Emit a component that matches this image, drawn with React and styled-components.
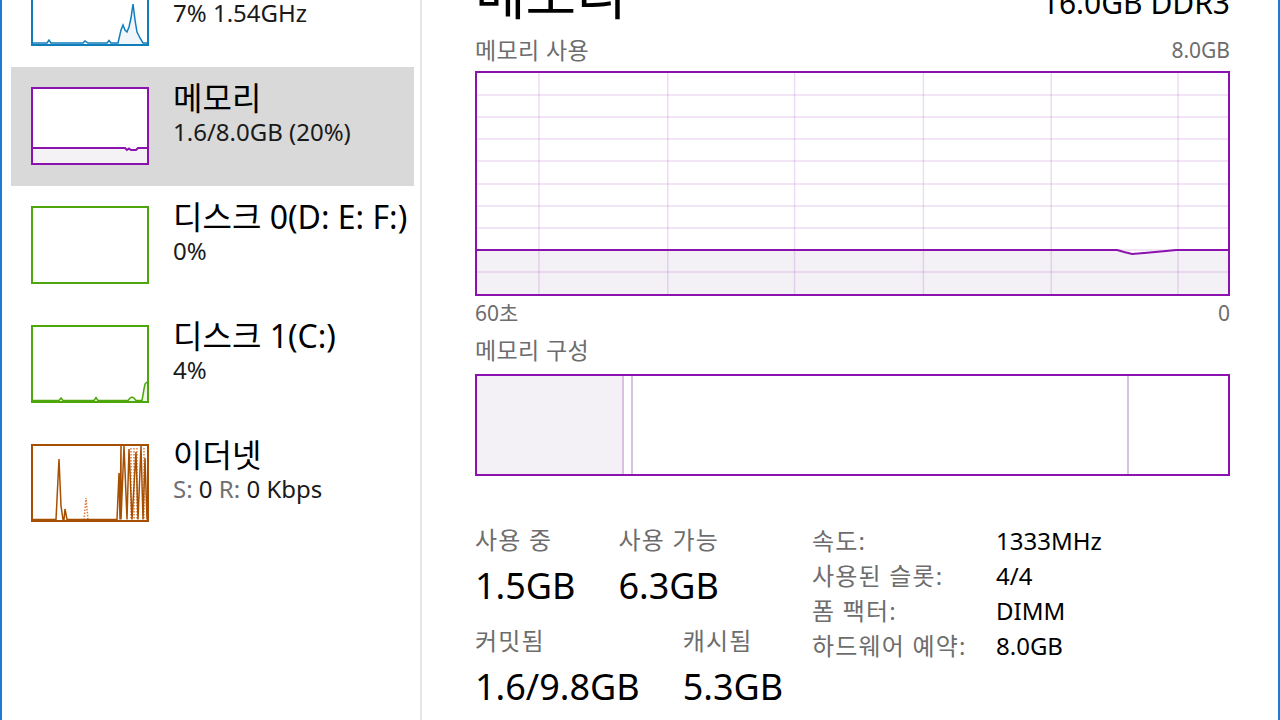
import React from "react";
import styled, { createGlobalStyle } from "styled-components";

const GlobalStyle = createGlobalStyle`
  html, body { margin: 0; padding: 0; background: #fff; }
  body {
    overflow: hidden;
    font-family: "Noto Sans", "Noto Sans CJK KR", sans-serif;
    color: #000;
  }
`;

const Window = styled.div`
  width: 1280px;
  height: 720px;
  box-sizing: border-box;
  border-left: 2px solid #1f7ad4;
  border-right: 2px solid #1f7ad4;
  display: flex;
  overflow: hidden;
  background: #fff;
`;

const Sidebar = styled.nav`
  width: 420px;
  flex: none;
  box-sizing: border-box;
  border-right: 2px solid #e6e6e6;
  padding-left: 9px;
  overflow: hidden;
`;

const SideList = styled.div`
  margin-top: -52px;
  display: flex;
  flex-direction: column;
`;

const SideItem = styled.div`
  width: 403px;
  height: 119px;
  flex: none;
  box-sizing: border-box;
  padding-left: 20px;
  display: flex;
  align-items: flex-start;
  gap: 24px;
  background: ${(p) => (p.$selected ? "#d9d9d9" : "transparent")};
`;

const Thumb = styled.div`
  width: 118px;
  height: 78px;
  margin-top: 20px;
  flex: none;
  box-sizing: border-box;
  border: 2px solid ${(p) => p.$color};
  background: #fff;
  svg { display: block; }
`;

const SideText = styled.div`
  padding-top: 13px;
  white-space: nowrap;
`;

const SideTitle = styled.div`
  font-size: 32px;
  line-height: 36px;
  color: #000;
`;

const SideSub = styled.div`
  font-size: 24px;
  line-height: 32px;
  color: #1a1a1a;
`;

const Dim = styled.span`
  color: #707070;
`;

const Main = styled.main`
  flex: 1;
  min-width: 0;
  padding: 0 48px 0 53px;
  display: flex;
  flex-direction: column;
`;

const Header = styled.div`
  margin-top: -37px;
  height: 60px;
  flex: none;
  display: flex;
  justify-content: space-between;
  align-items: baseline;
  white-space: nowrap;
`;

const BigTitle = styled.div`
  font-size: 55px;
  line-height: 60px;
  color: #000;
`;

const Spec = styled.div`
  font-size: 30px;
  line-height: 60px;
  color: #000;
`;

const LabelRow = styled.div`
  margin-top: ${(p) => p.$mt}px;
  display: flex;
  justify-content: space-between;
  font-size: 21px;
  line-height: 26px;
  color: #6d6d6d;
  white-space: nowrap;
`;

const Ko = styled.span`
  font-size: 23px;
  letter-spacing: 0.4px;
`;

const GraphBox = styled.div`
  margin-top: 8px;
  height: 225px;
  flex: none;
  box-sizing: border-box;
  border: 2px solid #8b12ae;
  svg { display: block; }
`;

const CompBar = styled.div`
  margin-top: 11px;
  height: 102px;
  flex: none;
  box-sizing: border-box;
  border: 2px solid #8b12ae;
  display: flex;
`;

const Segment = styled.div`
  flex: ${(p) => (p.$grow ? "1" : "none")};
  width: ${(p) => (p.$w ? `${p.$w}px` : "auto")};
  box-sizing: border-box;
  background: ${(p) => (p.$fill ? "#f3f1f5" : "#fff")};
  border-right: ${(p) => (p.$last ? "none" : "2px solid #dcc0e2")};
`;

const Stats = styled.div`
  margin-top: 47px;
  display: flex;
  align-items: flex-start;
`;

const StatBlock = styled.div`
  width: 337px;
  flex: none;
`;

const StatRow = styled.div`
  margin-top: ${(p) => p.$mt || 0}px;
  display: flex;
  gap: 43px;
`;

const StatItem = styled.div`
  display: flex;
  flex-direction: column;
  white-space: nowrap;
`;

const StatLabel = styled.div`
  font-size: 24px;
  line-height: 34px;
  letter-spacing: 1.2px;
  color: #6d6d6d;
`;

const StatValue = styled.div`
  margin-top: 7px;
  font-size: 36px;
  line-height: 44px;
  color: #000;
`;

const InfoTable = styled.div`
  display: grid;
  grid-template-columns: 184px auto;
  align-content: start;
  font-size: 24px;
  line-height: 35px;
  white-space: nowrap;
`;

const InfoLabel = styled.div`
  color: #6d6d6d;
  letter-spacing: 1.2px;
`;

const InfoValue = styled.div`
  color: #000;
`;

/* ---------- thumbnail drawings ---------- */

const CpuThumb = () => (
  <svg width="114" height="74" viewBox="0 0 114 74">
    <polygon
      points="0,74 0,73 14,73 16,70 18,73 50,73 52,71 55,73 74,73 76,70.5 78,73 85,73 88,60 90,55 92,60 94,62 96,57 98,48 100,34 102,50 104,62 107,68 110,73 114,73 114,74"
      fill="#f1f6fa"
    />
    <polyline
      points="0,73 14,73 16,70 18,73 50,73 52,71 55,73 74,73 76,70.5 78,73 85,73 88,60 90,55 92,60 94,62 96,57 98,48 100,34 102,50 104,62 107,68 110,73 114,73"
      fill="none"
      stroke="#117dbb"
      strokeWidth="1.5"
    />
  </svg>
);

const MemThumb = () => (
  <svg width="114" height="74" viewBox="0 0 114 74">
    <polygon
      points="0,59 92,59 94,61 96,59.5 98,61 103,61 105,59 114,59 114,74 0,74"
      fill="#f4f2f5"
    />
    <polyline
      points="0,59 92,59 94,61 96,59.5 98,61 103,61 105,59 114,59"
      fill="none"
      stroke="#8b12ae"
      strokeWidth="2"
    />
  </svg>
);

const EmptyThumb = () => <svg width="114" height="74" viewBox="0 0 114 74" />;

const Disk1Thumb = () => (
  <svg width="114" height="74" viewBox="0 0 114 74">
    <polygon
      points="0,74 26,74 28,71 30,74 61,74 63,70.5 65,74 95,74 97,71 99,70 101,71 103,74 109,74 111,62 112,57 114,55 114,74"
      fill="#eef6e8"
    />
    <polyline
      points="0,73.5 26,73.5 28,71 30,73.5 61,73.5 63,70.5 65,73.5 95,73.5 97,71 99,70 101,71 103,73.5 109,73.5 111,62 112,57 114,55"
      fill="none"
      stroke="#4da60c"
      strokeWidth="1.5"
    />
  </svg>
);

const EthThumb = () => (
  <svg width="114" height="74" viewBox="0 0 114 74">
    <g fill="none" stroke="#e07a3a" strokeWidth="1.5" strokeDasharray="1.5 1.5">
      <polyline points="51,74 53,52 55,74" />
      <line x1="98" y1="2" x2="98" y2="74" />
      <line x1="101" y1="2" x2="101" y2="74" />
      <line x1="104" y1="2" x2="104" y2="74" />
      <line x1="111" y1="2" x2="111" y2="74" />
    </g>
    <polyline
      points="0,73.5 23,73.5 26,13 28,60 30,73.5 31,73.5 32,63 34,73.5 84,73.5 86,27 87,73.5 88,0 88,73.5 91,0 94,73.5 96,3 99,73.5 103,6 105,73.5 108,0 110,73.5 112,12 114,73.5"
      fill="none"
      stroke="#a74f01"
      strokeWidth="1.5"
    />
  </svg>
);

/* ---------- main graph ---------- */

const GW = 752;
const GH = 221;
const vLines = [62, 191, 318, 447, 575, 702];
const hLines = Array.from({ length: 9 }, (_, i) => Math.round((i + 1) * (GH / 10)));
const usage = "0,177 641,177 648,179 656,181 668,180 690,178 700,177 752,177";

const MemoryGraph = () => (
  <svg width="100%" height="100%" viewBox={`0 0 ${GW} ${GH}`} preserveAspectRatio="none">
    <polygon points={`${usage} ${GW},${GH} 0,${GH}`} fill="#f3f1f5" />
    <g stroke="rgba(170,80,190,0.2)" strokeWidth="1.5">
      {hLines.map((y) => (
        <line key={`h${y}`} x1="0" y1={y} x2={GW} y2={y} />
      ))}
      {vLines.map((x) => (
        <line key={`v${x}`} x1={x} y1="0" x2={x} y2={GH} />
      ))}
    </g>
    <polyline points={usage} fill="none" stroke="#8b12ae" strokeWidth="2" />
  </svg>
);

const sideItems = [
  { key: "cpu", color: "#117dbb", title: "CPU", sub: "7% 1.54GHz", Graph: CpuThumb },
  { key: "mem", color: "#8b12ae", title: "메모리", sub: "1.6/8.0GB (20%)", Graph: MemThumb, selected: true },
  { key: "d0", color: "#4da60c", title: "디스크 0(D: E: F:)", sub: "0%", Graph: EmptyThumb },
  { key: "d1", color: "#4da60c", title: "디스크 1(C:)", sub: "4%", Graph: Disk1Thumb },
  {
    key: "eth",
    color: "#a74f01",
    title: "이더넷",
    sub: (
      <>
        <Dim>S:</Dim> 0 <Dim>R:</Dim> 0 Kbps
      </>
    ),
    Graph: EthThumb,
  },
];

const info = [
  ["속도:", "1333MHz"],
  ["사용된 슬롯:", "4/4"],
  ["폼 팩터:", "DIMM"],
  ["하드웨어 예약:", "8.0GB"],
];

export default function App() {
  return (
    <>
      <GlobalStyle />
      <Window>
        <Sidebar>
          <SideList>
            {sideItems.map(({ key, color, title, sub, Graph, selected }) => (
              <SideItem key={key} $selected={selected}>
                <Thumb $color={color}>
                  <Graph />
                </Thumb>
                <SideText>
                  <SideTitle>{title}</SideTitle>
                  <SideSub>{sub}</SideSub>
                </SideText>
              </SideItem>
            ))}
          </SideList>
        </Sidebar>
        <Main>
          <Header>
            <BigTitle>메모리</BigTitle>
            <Spec>16.0GB DDR3</Spec>
          </Header>
          <LabelRow $mt={14}>
            <Ko>메모리 사용</Ko>
            <span>8.0GB</span>
          </LabelRow>
          <GraphBox>
            <MemoryGraph />
          </GraphBox>
          <LabelRow $mt={4}>
            <span>60초</span>
            <span>0</span>
          </LabelRow>
          <LabelRow $mt={11}>
            <Ko>메모리 구성</Ko>
          </LabelRow>
          <CompBar>
            <Segment $fill $w={147} />
            <Segment $w={9} />
            <Segment $grow />
            <Segment $w={99} $last />
          </CompBar>
          <Stats>
            <StatBlock>
              <StatRow>
                <StatItem>
                  <StatLabel>사용 중</StatLabel>
                  <StatValue>1.5GB</StatValue>
                </StatItem>
                <StatItem>
                  <StatLabel>사용 가능</StatLabel>
                  <StatValue>6.3GB</StatValue>
                </StatItem>
              </StatRow>
              <StatRow $mt={16}>
                <StatItem>
                  <StatLabel>커밋됨</StatLabel>
                  <StatValue>1.6/9.8GB</StatValue>
                </StatItem>
                <StatItem>
                  <StatLabel>캐시됨</StatLabel>
                  <StatValue>5.3GB</StatValue>
                </StatItem>
              </StatRow>
            </StatBlock>
            <InfoTable>
              {info.map(([l, v]) => (
                <React.Fragment key={l}>
                  <InfoLabel>{l}</InfoLabel>
                  <InfoValue>{v}</InfoValue>
                </React.Fragment>
              ))}
            </InfoTable>
          </Stats>
        </Main>
      </Window>
    </>
  );
}
